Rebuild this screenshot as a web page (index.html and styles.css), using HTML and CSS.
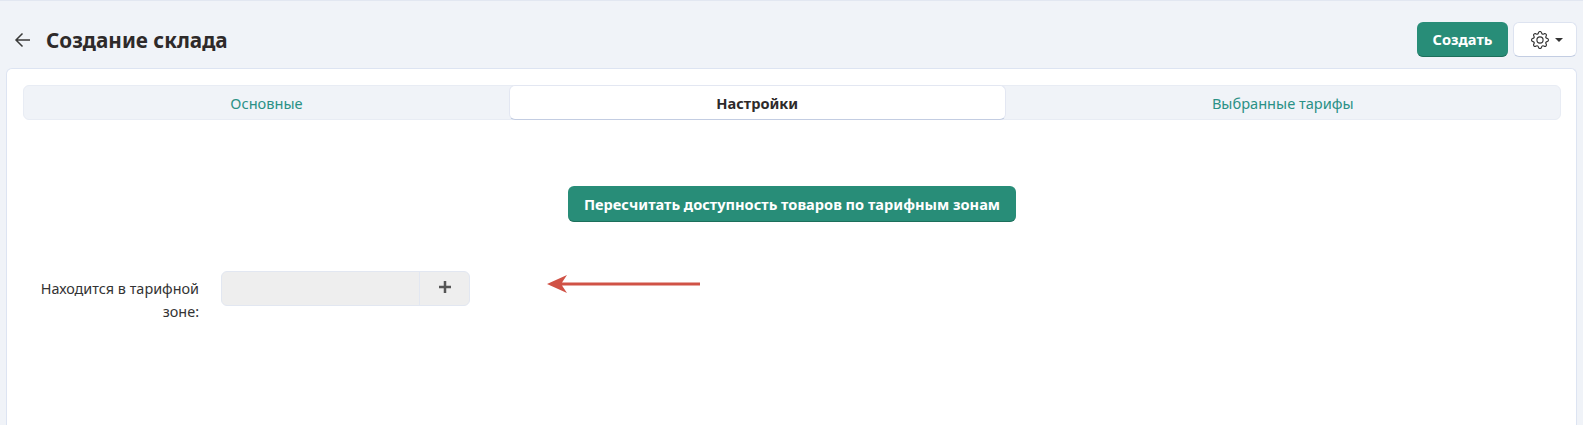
FILE: index.html
```html
<!DOCTYPE html>
<html lang="ru">
<head>
    <meta charset="UTF-8">
    <title>Создание склада</title>
    <link rel="stylesheet" href="styles.css">
</head>
<body>
    <header class="page-head">
        <a class="back-link" href="#">
            <svg width="18" height="16" viewBox="0 0 18 16" fill="none" stroke="#3a3a3a" stroke-width="1.5">
                <path d="M16 8H2M8.5 1.5 2 8l6.5 6.5"/>
            </svg>
        </a>
        <h1 class="page-title">Создание склада</h1>
        <button type="button" class="btn btn-create">Создать</button>
        <button type="button" class="btn-settings">
            <svg width="18" height="18" viewBox="0 0 16 16" fill="#333">
                <path d="M8 4.754a3.246 3.246 0 1 0 0 6.492 3.246 3.246 0 0 0 0-6.492zM5.754 8a2.246 2.246 0 1 1 4.492 0 2.246 2.246 0 0 1-4.492 0z"/>
                <path d="M9.796 1.343c-.527-1.79-3.065-1.79-3.592 0l-.094.319a.873.873 0 0 1-1.255.52l-.292-.16c-1.64-.892-3.433.902-2.54 2.541l.159.292a.873.873 0 0 1-.52 1.255l-.319.094c-1.79.527-1.79 3.065 0 3.592l.319.094a.873.873 0 0 1 .52 1.255l-.16.292c-.892 1.64.901 3.434 2.541 2.54l.292-.159a.873.873 0 0 1 1.255.52l.094.319c.527 1.79 3.065 1.79 3.592 0l.094-.319a.873.873 0 0 1 1.255-.52l.292.16c1.64.893 3.434-.902 2.54-2.541l-.159-.292a.873.873 0 0 1 .52-1.255l.319-.094c1.79-.527 1.79-3.065 0-3.592l-.319-.094a.873.873 0 0 1-.52-1.255l.16-.292c.893-1.64-.902-3.433-2.541-2.54l-.292.159a.873.873 0 0 1-1.255-.52l-.094-.319zm-2.633.283c.246-.835 1.428-.835 1.674 0l.094.319a1.873 1.873 0 0 0 2.693 1.115l.291-.16c.764-.415 1.6.42 1.184 1.185l-.159.292a1.873 1.873 0 0 0 1.116 2.692l.318.094c.835.246.835 1.428 0 1.674l-.319.094a1.873 1.873 0 0 0-1.115 2.693l.16.291c.415.764-.42 1.6-1.185 1.184l-.291-.159a1.873 1.873 0 0 0-2.693 1.116l-.094.318c-.246.835-1.428.835-1.674 0l-.094-.319a1.873 1.873 0 0 0-2.692-1.115l-.292.16c-.764.415-1.6-.42-1.184-1.185l.159-.291A1.873 1.873 0 0 0 1.945 8.93l-.319-.094c-.835-.246-.835-1.428 0-1.674l.319-.094A1.873 1.873 0 0 0 3.06 4.377l-.16-.292c-.415-.764.42-1.6 1.185-1.184l.292.159a1.873 1.873 0 0 0 2.692-1.115l.094-.319z"/>
            </svg>
            <span class="caret"></span>
        </button>
    </header>

    <main class="card">
        <div class="tabs">
            <a class="tab" href="#">Основные</a>
            <a class="tab active" href="#">Настройки</a>
            <a class="tab" href="#">Выбранные тарифы</a>
        </div>

        <div class="recalc">
            <button type="button" class="btn btn-recalc">Пересчитать доступность товаров по тарифным зонам</button>
        </div>

        <div class="form-row">
            <label class="form-label">Находится в тарифной зоне:</label>
            <div class="input-group">
                <div class="input-field"></div>
                <button type="button" class="input-add">
                    <svg width="12" height="12" viewBox="0 0 12 12" fill="none" stroke="#555" stroke-width="2.500">
                        <path d="M6 0v12M0 6h12"/>
                    </svg>
                </button>
            </div>
            <svg class="note-arrow" width="153" height="18" viewBox="0 0 153 18">
                <path d="M0 9 20 0 15 7.500H153V10.500H15L20 18z" fill="#d05246"/>
            </svg>
        </div>
    </main>
</body>
</html>
```

FILE: styles.css
```css
* {
    box-sizing: border-box;
}

html, body {
    height: 100%;
}

body {
    margin: 0;
    overflow: hidden;
    background-color: #f0f3f8;
    border-top: 1px solid #e2e7f1;
    color: #333;
    font-family: "Noto Sans", "Open Sans", sans-serif;
    font-size: 14.6px;
}

.page-head {
    display: flex;
    align-items: center;
    height: 67px;
    padding: 10px 6px 0 14px;
}

.back-link {
    display: flex;
    width: 32px;
}

.page-title {
    flex: 1;
    margin: 0;
    color: #2e2a2a;
    font-size: 20.7px;
    font-weight: 700;
}

.btn {
    border: 0;
    border-bottom: 1px solid #1d6f5b;
    border-radius: 6px;
    background-color: #288d78;
    color: #fff;
    font-family: inherit;
    font-size: 14.6px;
    font-weight: 700;
}

.btn-create {
    width: 91px;
    height: 35px;
}

.btn-settings {
    display: flex;
    align-items: center;
    justify-content: center;
    gap: 6px;
    width: 64px;
    height: 35px;
    margin-left: 5px;
    padding: 0 0 0 4px;
    border: 1px solid #dde3f0;
    border-bottom-color: #c3cde2;
    border-radius: 6px;
    background-color: #fff;
}

.caret {
    border-top: 4px solid #333;
    border-left: 4px solid transparent;
    border-right: 4px solid transparent;
}

.card {
    height: 357px;
    margin: 0 6px;
    padding: 16px 15px 16px 16px;
    border: 1px solid #dde4f2;
    border-bottom: 0;
    border-radius: 6px 6px 0 0;
    background-color: #fff;
}

.tabs {
    display: flex;
    height: 35px;
    border: 1px solid #e8ecf4;
    border-radius: 6px;
    background-color: #f0f3f8;
}

.tab {
    display: flex;
    flex: 1 1 auto;
    align-items: center;
    justify-content: center;
    color: #2a9186;
    text-decoration: none;
}

.tab.active {
    margin: -1px 0;
    border: 1px solid #e3e7f2;
    border-bottom-color: #c3cde2;
    border-radius: 6px;
    background-color: #fff;
    color: #2e2a2a;
    font-weight: 700;
}

.recalc {
    display: flex;
    justify-content: center;
    margin-top: 66px;
}

.btn-recalc {
    width: 448px;
    height: 36px;
}

.form-row {
    display: flex;
    align-items: flex-start;
    margin-top: 49px;
}

.form-label {
    width: 176px;
    padding-top: 6px;
    color: #333;
    font-size: 14.4px;
    line-height: 23px;
    text-align: right;
}

.input-group {
    display: flex;
    width: 249px;
    height: 35px;
    margin-left: 22px;
    border: 1px solid #e2e7f1;
    border-radius: 6px;
    background-color: #eeeeee;
}

.input-field {
    flex: 1;
}

.input-add {
    display: flex;
    align-items: center;
    justify-content: center;
    width: 50px;
    padding: 0 0 3px;
    border: 0;
    border-left: 1px solid #e2e7f1;
    background: none;
}

.note-arrow {
    margin: 4px 0 0 77px;
}
```
